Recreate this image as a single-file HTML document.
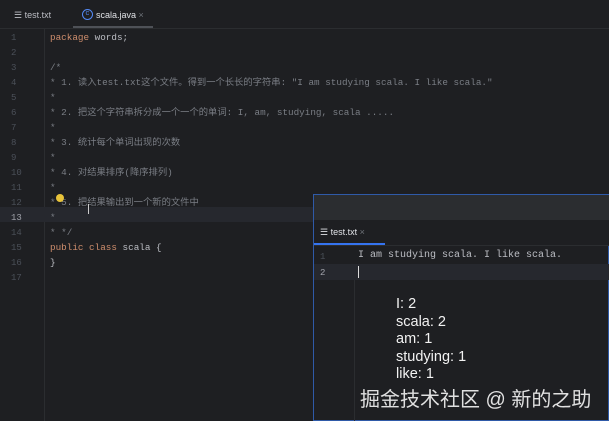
<!DOCTYPE html>
<html><head><style>
body{margin:0;width:609px;height:421px;background:#1e1f22;overflow:hidden;position:relative;font-family:"Liberation Mono","Noto Sans CJK SC",monospace;}
.a{position:absolute;white-space:pre;}
.code{font-size:10px;color:#bcbec4;}
.ln{font-size:9px;color:#4b5059;}
.k{color:#cf8e6d}
.c{color:#7a7e85}
.s{font-family:"Liberation Sans","Noto Sans CJK SC",sans-serif;}
</style></head><body>
<div class="a" style="left:0;top:0;width:609px;height:28px;background:#1e1f22;border-bottom:1px solid #2b2d30"></div>
<div class="a s" style="left:14px;top:10px;font-size:9px;color:#bcbec4">☰ test.txt</div>
<div class="a" style="left:82px;top:9px;width:9px;height:9px;border:1.5px solid #548af7;border-radius:50%;font-size:7px;color:#548af7;line-height:9px;text-align:center">c</div>
<div class="a s" style="left:96px;top:10px;font-size:9px;color:#dfe1e5">scala.java <span style="color:#6f737a">×</span></div>
<div class="a" style="left:73px;top:26px;width:80px;height:2px;background:#4e5157"></div>
<div class="a" style="left:44px;top:29px;width:1px;height:392px;background:#2b2d30"></div>
<div class="a" style="left:0;top:207px;width:313px;height:15px;background:#26282e"></div>
<div class="a ln" style="left:11px;top:31px;line-height:15px">1
2
3
4
5
6
7
8
9
10
11
12
<span style="color:#a1a3ab">13</span>
14
15
16
17</div>
<div class="a code" style="left:50px;top:30px;line-height:15px;font-size:9.3px"><span class="k">package</span> words;

<span class="c">/*
* 1. 读入test.txt这个文件。得到一个长长的字符串: "I am studying scala. I like scala."
*
* 2. 把这个字符串拆分成一个一个的单词: I, am, studying, scala .....
*
* 3. 统计每个单词出现的次数
*
* 4. 对结果排序(降序排列)
*
* 5. 把结果输出到一个新的文件中
*
* */</span>
<span class="k">public class</span> scala {
}</div>
<div class="a" style="left:56px;top:194px;width:8px;height:8px;border-radius:50%;background:#e8c33a"></div>
<div class="a" style="left:88px;top:204px;width:1px;height:10px;background:#ccc"></div>
<div class="a" style="left:313px;top:194px;width:296px;height:227px;background:#1e1f22;border:1px solid #2f5aa8;box-sizing:border-box"></div>
<div class="a" style="left:314px;top:195px;width:295px;height:25px;background:#2b2d30"></div>
<div class="a" style="left:314px;top:220px;width:295px;height:25px;background:#1e1f22;border-bottom:1px solid #2b2d30"></div>
<div class="a s" style="left:320px;top:227px;font-size:9px;color:#dfe1e5">☰ test.txt <span style="color:#6f737a">×</span></div>
<div class="a" style="left:314px;top:243px;width:71px;height:2px;background:#3574f0"></div>
<div class="a" style="left:314px;top:264px;width:295px;height:16px;background:#26282e"></div>
<div class="a" style="left:354px;top:280px;width:1px;height:141px;background:#2b2d30"></div>
<div class="a ln" style="left:320px;top:249px;line-height:16px">1
<span style="color:#a1a3ab">2</span></div>
<div class="a code" style="left:358px;top:248px;line-height:16px">I am studying scala. I like scala.</div>
<div class="a" style="left:358px;top:266px;width:1px;height:12px;background:#ddd"></div>
<div class="a s" style="left:396px;top:296px;font-size:14.5px;line-height:17.6px;color:#f2f2f2">I: 2
scala: 2
am: 1
studying: 1
like: 1</div>
<div class="a s" style="left:360px;top:383px;font-size:20px;color:#e0e0e0">掘金技术社区 @ 新的之助</div>
</body></html>
